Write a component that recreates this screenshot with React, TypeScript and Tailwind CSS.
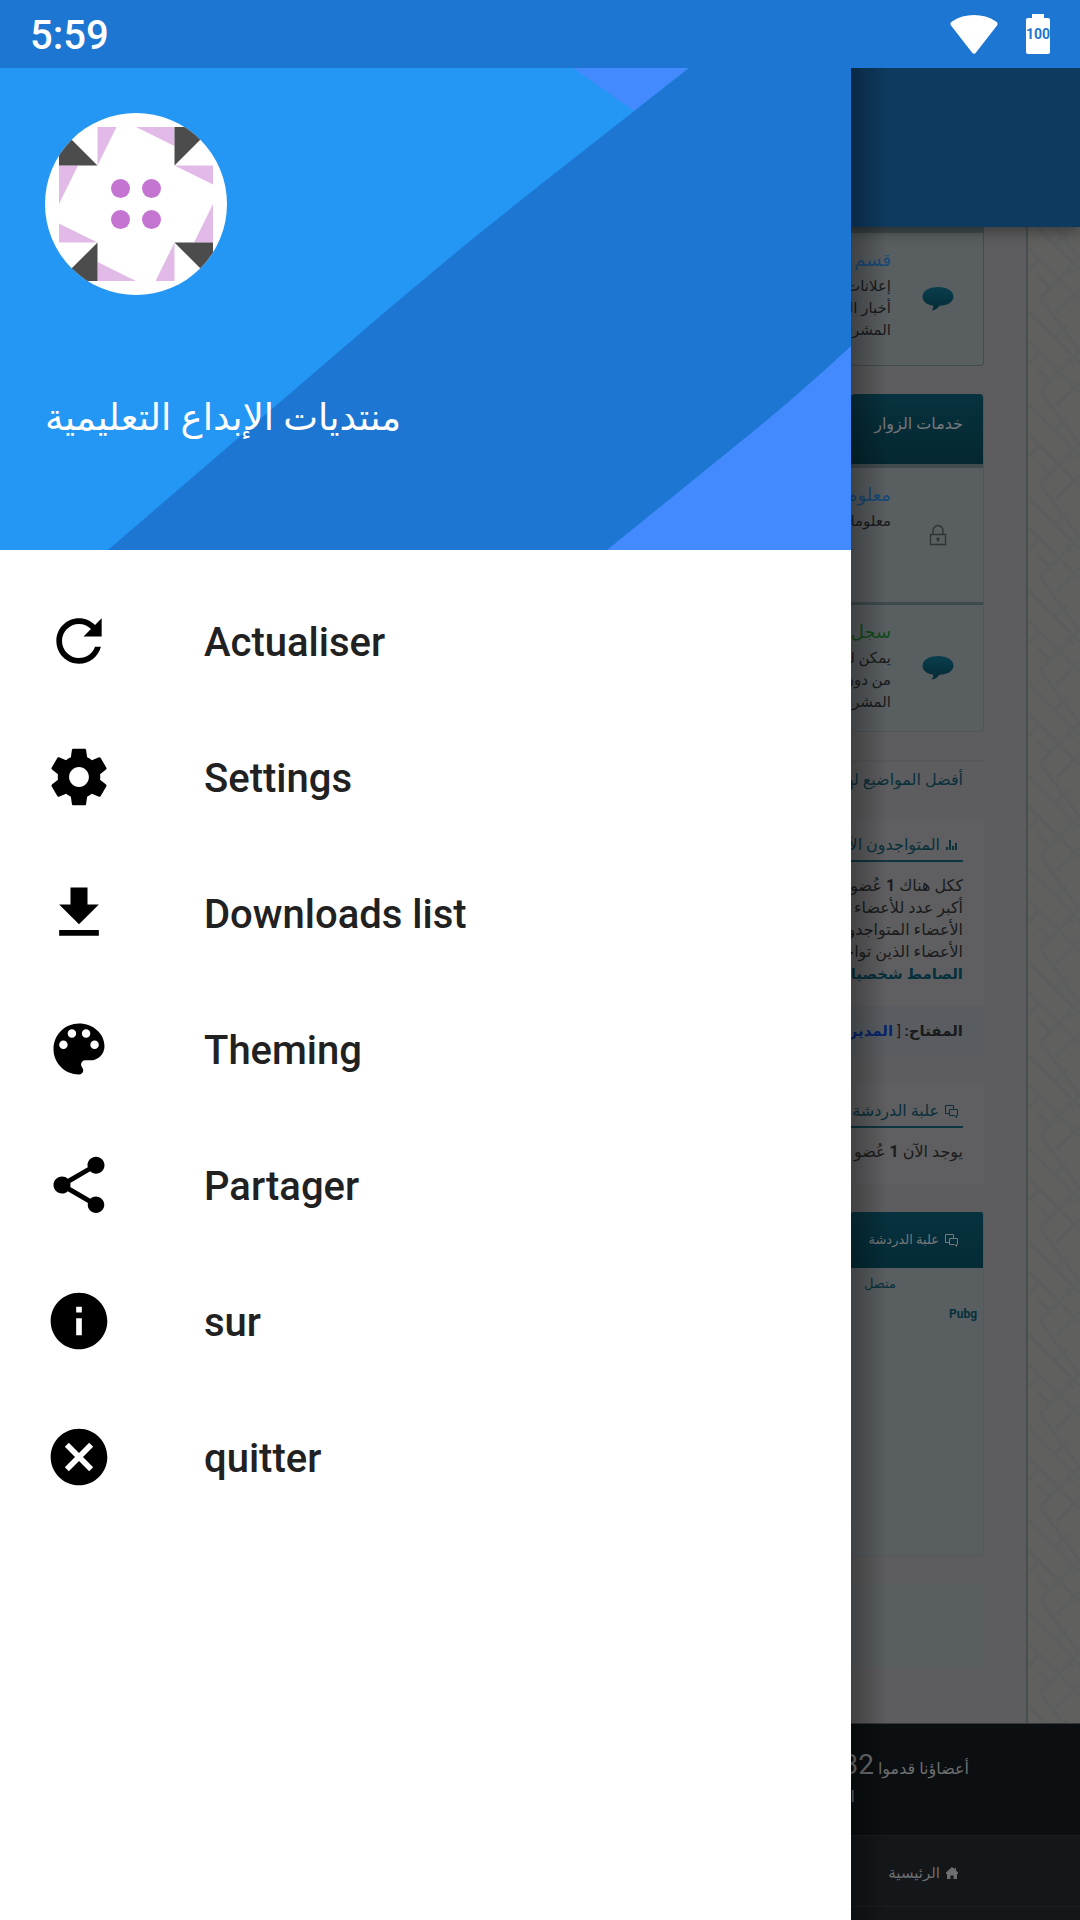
import type { ReactNode } from "react";

const MENU = [
  {
    label: "Actualiser",
    d: "M17.65 6.35C16.2 4.9 14.21 4 12 4c-4.42 0-7.99 3.58-7.99 8s3.57 8 7.99 8c3.73 0 6.84-2.55 7.73-6h-2.08c-.82 2.33-3.04 4-5.65 4-3.31 0-6-2.69-6-6s2.69-6 6-6c1.66 0 3.14.69 4.22 1.78L13.6 10.4h6.4V4l-2.35 2.35z",
  },
  {
    label: "Settings",
    d: "M19.43 12.98c.04-.32.07-.64.07-.98s-.03-.66-.07-.98l2.11-1.65c.19-.15.24-.42.12-.64l-2-3.46c-.12-.22-.39-.3-.61-.22l-2.49 1c-.52-.4-1.08-.73-1.69-.98l-.38-2.65C14.46 2.18 14.25 2 14 2h-4c-.25 0-.46.18-.49.42l-.38 2.65c-.61.25-1.17.59-1.69.98l-2.49-1c-.23-.09-.49 0-.61.22l-2 3.46c-.13.22-.07.49.12.64l2.11 1.65c-.04.32-.07.65-.07.98s.03.66.07.98l-2.11 1.65c-.19.15-.24.42-.12.64l2 3.46c.12.22.39.3.61.22l2.49-1c.52.4 1.08.73 1.69.98l.38 2.65c.03.24.24.42.49.42h4c.25 0 .46-.18.49-.42l.38-2.65c.61-.25 1.17-.59 1.69-.98l2.49 1c.23.09.49 0 .61-.22l2-3.46c.12-.22.07-.49-.12-.64l-2.11-1.65zM12 15.5c-1.93 0-3.5-1.57-3.5-3.5s1.57-3.5 3.5-3.5 3.5 1.57 3.5 3.5-1.57 3.5-3.5 3.5z",
  },
  { label: "Downloads list", d: "M19 9h-4V3H9v6H5l7 7 7-7zM5 18v2h14v-2H5z" },
  {
    label: "Theming",
    d: "M12 3c-4.97 0-9 4.03-9 9s4.03 9 9 9c.83 0 1.5-.67 1.5-1.5 0-.39-.15-.74-.39-1.01-.23-.26-.38-.61-.38-.99 0-.83.67-1.5 1.5-1.5H16c2.76 0 5-2.24 5-5 0-4.42-4.03-8-9-8zm-5.5 9c-.83 0-1.5-.67-1.5-1.5S5.67 9 6.5 9 8 9.67 8 10.5 7.33 12 6.5 12zm3-4C8.67 8 8 7.33 8 6.5S8.67 5 9.5 5s1.5.67 1.5 1.5S10.33 8 9.5 8zm5 0c-.83 0-1.5-.67-1.5-1.5S13.67 5 14.5 5s1.5.67 1.5 1.5S15.33 8 14.5 8zm3 4c-.83 0-1.5-.67-1.5-1.5S16.67 9 17.5 9s1.5.67 1.5 1.5-.67 1.5-1.5 1.5z",
  },
  {
    label: "Partager",
    d: "M18 16.08c-.76 0-1.44.3-1.96.77L8.91 12.7c.05-.23.09-.46.09-.7s-.04-.47-.09-.7l7.05-4.11c.54.5 1.25.81 2.04.81 1.66 0 3-1.34 3-3s-1.34-3-3-3-3 1.34-3 3c0 .24.04.47.09.7L8.04 9.81C7.5 9.31 6.79 9 6 9c-1.66 0-3 1.34-3 3s1.34 3 3 3c.79 0 1.5-.31 2.04-.81l7.12 4.16c-.05.21-.08.43-.08.65 0 1.61 1.31 2.92 2.92 2.92 1.61 0 2.92-1.31 2.92-2.92s-1.31-2.92-2.92-2.92z",
  },
  {
    label: "sur",
    d: "M12 2C6.48 2 2 6.48 2 12s4.48 10 10 10 10-4.48 10-10S17.52 2 12 2zm1 15h-2v-6h2v6zm0-8h-2V7h2v2z",
  },
  {
    label: "quitter",
    d: "M12 2C6.47 2 2 6.47 2 12s4.47 10 10 10 10-4.47 10-10S17.53 2 12 2zm5 13.59L15.59 17 12 13.41 8.41 17 7 15.59 10.59 12 7 8.41 8.41 7 12 10.59 15.59 7 17 8.41 13.41 12 17 15.59z",
  },
];

function StatusBar() {
  return (
    <div className="flex h-[68px] items-center justify-between bg-[#1c76d2] px-[30px] text-white">
      <span className="pt-1 text-[40px] leading-[60px] font-medium">5:59</span>
      <div className="flex items-center gap-7">
        <svg className="h-10 w-12" viewBox="0 0 48 40" fill="currentColor" aria-hidden="true">
          <path d="M1 11.500Q-.6 9 2 7.400Q12 1 24 1T46 7.400Q48.600 9 47 11.500L26 38.500Q24 41 22 38.500z" />
        </svg>
        <div className="flex flex-col items-center">
          <div className="h-1 w-3 bg-white" />
          <div className="flex h-9 w-6 items-center justify-center rounded-xs bg-white pb-1 text-[14px] leading-4 font-bold text-[#1c76d2]">
            100
          </div>
        </div>
      </div>
    </div>
  );
}

function Avatar() {
  return (
    <svg className="h-[182px] w-[182px] rounded-full bg-white" viewBox="0 0 182 182" aria-hidden="true">
      <path
        fill="#e1bae7"
        d="M52.500 14h19l-19 38.500zM91 14h38.500v19zM129.500 52.500H168v19zM168 91v38.500h-19zM129.500 129.500V168h-19zM91 168H52.500v-19zM52.500 129.500H14v-19zM14 52.500h19L14 91z"
      />
      <path
        fill="#4c4c4c"
        d="M14 14l38.500 38.500H14zM129.500 14H168l-38.500 38.500zM168 168l-38.500-38.500H168zM52.500 129.500V168H14z"
      />
      <g fill="#c475d2">
        <circle cx="75.500" cy="75.500" r="9.500" />
        <circle cx="106.500" cy="75.500" r="9.500" />
        <circle cx="75.500" cy="106.500" r="9.500" />
        <circle cx="106.500" cy="106.500" r="9.500" />
      </g>
    </svg>
  );
}

function Drawer() {
  return (
    <aside className="z-10 flex w-[851px] shrink-0 flex-col bg-white">
      <div className="relative h-[482px] overflow-hidden bg-[#2496f4]">
        <svg className="absolute inset-0 h-full w-full" viewBox="0 0 851 482" preserveAspectRatio="none" aria-hidden="true">
          <path fill="#448aff" d="M573 0H689L634 43z" />
          <path fill="#1c76d2" d="M689 0H851V482H108L385 244Q430 206 470 173L540 117z" />
          <path fill="#448aff" d="M851 278Q806 320 755 362L607 482H851z" />
        </svg>
        <div className="relative flex h-full flex-col justify-between px-[45px] pt-[45px] pb-[104px]">
          <Avatar />
          <p className="text-left text-[37px] leading-[56px] text-white" dir="rtl">
            منتديات الإبداع التعليمية
          </p>
        </div>
      </div>
      <nav className="flex flex-col pt-[23px]">
        {MENU.map((item) => (
          <button key={item.label} type="button" className="flex h-[136px] items-center gap-[91px] pl-[45px] text-left">
            <svg className="h-[68px] w-[68px]" viewBox="0 0 24 24" fill="#000" aria-hidden="true">
              <path d={item.d} />
            </svg>
            <span className="pt-1 text-[40px] leading-[48px] font-medium text-[#212121]">{item.label}</span>
          </button>
        ))}
      </nav>
    </aside>
  );
}

function Bubble() {
  return (
    <svg className="h-6 w-8" viewBox="0 0 32 24" aria-hidden="true">
      <defs>
        <linearGradient id="bubble" x1="0" y1="0" x2="0" y2="1">
          <stop offset="0" stopColor="#0a3e4d" />
          <stop offset="1" stopColor="#032a35" />
        </linearGradient>
      </defs>
      <path
        fill="url(#bubble)"
        d="M16 0C7 0 .5 4 .5 9.500c0 5 4 8.200 10.700 9.100.3 1.900-.3 3.500-1.600 5.200 3.500-.7 6.200-2.500 7.800-5C25.500 18.600 31.500 15 31.500 9.500 31.500 4 25 0 16 0z"
      />
    </svg>
  );
}

function Lock() {
  return (
    <svg className="h-10 w-10" viewBox="0 0 40 40" fill="none" stroke="#303235" strokeWidth="1.300" aria-hidden="true">
      <circle cx="20" cy="20" r="18.500" stroke="#5e5f60" strokeWidth="1" />
      <path d="M12.500 19.500h15v10h-15zM15 19.500v-4a5 5 0 0 1 10 0v4M20 24.500v2.500" />
      <circle cx="20" cy="23.800" r="1" />
    </svg>
  );
}

function ChatIcon() {
  return (
    <svg className="h-[13px] w-[13px] shrink-0" viewBox="0 0 13 13" fill="none" stroke="currentColor" aria-hidden="true">
      <path d="M4.500 8.500h-4v-8h8v4M4.500 4.500h8v6h-1v2l-2-2h-5z" />
    </svg>
  );
}

function ForumRow({ icon, title, color, lines }: { icon: ReactNode; title: string; color: string; lines: string[] }) {
  return (
    <div className="flex items-center gap-[27px] bg-[#595e61] pr-[25px]">
      <div className="flex w-10 shrink-0 justify-center">{icon}</div>
      <div className="h-full min-w-0 flex-1 pt-3">
        <a href="#" className={`block text-[18px] leading-[30px] ${color}`}>
          {title}
        </a>
        {lines.map((line) => (
          <p key={line} className="text-[15px] leading-[22px] text-[#1a1b1c]">
            {line}
          </p>
        ))}
      </div>
    </div>
  );
}

function BlockTitle({ icon, children }: { icon: ReactNode; children: ReactNode }) {
  return (
    <h2 className="flex h-7 items-center gap-[6px] border-b-2 border-[#0e3540] pr-[5px] pb-1 text-[16px] leading-6 text-[#0a303b]">
      {icon}
      <span>{children}</span>
    </h2>
  );
}

function Pattern() {
  return (
    <svg className="h-full w-full" aria-hidden="true">
      <defs>
        <pattern id="weave" width="52" height="93" patternUnits="userSpaceOnUse">
          <path
            d="M0 -9L52 43M0 84L52 136M0 21L52 73M12 71L52 31M12 71L52 125M12 -22L52 32M12 71L52 31M10 49L24 63M0 44L10 34M28 86L52 62M28 -7L52 -31M26 19L40 5M38 38L46 46"
            fill="none"
            stroke="#5c5e5d"
            strokeWidth="4"
          />
        </pattern>
      </defs>
      <rect width="100%" height="100%" fill="url(#weave)" />
    </svg>
  );
}

function ForumPage() {
  return (
    <div className="relative flex min-w-0 flex-1 flex-col overflow-hidden bg-[#5d5d5f] whitespace-nowrap" dir="rtl">
      <div className="z-10 h-[159px] shrink-0 bg-[#0e3a5f] shadow-[0_4px_14px_rgba(0,0,0,0.4)]" />
      <div className="flex h-[1496px] shrink-0">
        <div className="w-[54px] shrink-0 border-l-2 border-[#484e50] bg-[#60605f]">
          <Pattern />
        </div>
        <main className="min-w-0 flex-1 pr-[42px]">
          <section className="grid h-[139px] overflow-hidden rounded-b border-t-6 border-r border-b border-[#424b4e]">
            <ForumRow icon={<Bubble />} title="قسم الإدارة" color="text-[#174a78]" lines={["إعلانات المنتدى", "أخبار المنتدى", "المشرفون"]} />
          </section>

          <section className="mt-7 overflow-hidden rounded border-r border-b border-[#505659]">
            <h2 className="h-[70px] bg-linear-to-b from-[#07323f] to-[#042730] pt-3 pr-[20px] text-[16px] leading-9 text-[#77787a]">
              خدمات الزوار
            </h2>
            <div className="grid h-[138px] border-t-4 border-[#424b4e]">
              <ForumRow icon={<Lock />} title="معلومات" color="text-[#174a78]" lines={["معلومات"]} />
            </div>
            <div className="grid h-[129px] border-t-3 border-[#3f4a4c]">
              <ForumRow icon={<Bubble />} title="سجل الزوار" color="text-[#0f4d1b]" lines={["يمكن للزوار", "من دون تسجيل", "المشرفون"]} />
            </div>
          </section>

          <div className="mt-7 border-t-2 border-[#56585a] pt-1 pr-[21px]">
            <a href="#" className="block text-[16px] leading-7 text-[#0a303b]">
              أفضل المواضيع لهذا اليوم
            </a>
          </div>

          <section className="mt-6 bg-[#5f5f61]">
            <div className="h-[188px] pt-4 pr-[21px]">
              <BlockTitle
                icon={
                  <svg className="h-3 w-3 shrink-0" viewBox="0 0 12 12" fill="currentColor" aria-hidden="true">
                    <path d="M0 8h2v3H0zM3 1h2v10H3zM6 7h2v4H6zM9 4h2v7H9z" />
                  </svg>
                }
              >
                المتواجدون الآن
              </BlockTitle>
              <div className="pt-[13px] text-[16px] leading-[22px] text-[#1a1b1c]">
                <p>
                  ككل هناك <b>1</b> عُضو متصل
                </p>
                <p>أكبر عدد للأعضاء المتواجدين</p>
                <p>الأعضاء المتواجدون</p>
                <p>الأعضاء الذين تواجدوا</p>
                <p className="text-[15px]">
                  <a href="#" className="font-bold text-[#06303c]">
                    الصامط شخصيا
                  </a>
                  ,
                </p>
              </div>
            </div>
            <p className="h-[51px] bg-[#595d61] pr-[21px] text-[15px] leading-[50px] text-[#1a1b1c]">
              <b>المفتاح:</b> [ <b className="text-[#08256b]">المدير</b> ]
            </p>
          </section>

          <section className="mt-[27px] h-[100px] bg-[#5f5f61] pt-4 pr-[21px]">
            <BlockTitle icon={<ChatIcon />}>علبة الدردشة</BlockTitle>
            <p className="pt-[13px] text-[16px] leading-[22px] text-[#1a1b1c]">
              يوجد الآن <b>1</b> عُضو متصل
            </p>
          </section>

          <section className="mt-7 h-[344px] border-r border-b border-[#54595c] bg-[#595e61]">
            <h2 className="flex h-14 items-center gap-[6px] rounded-t-xs bg-linear-to-b from-[#07323f] to-[#042b36] pr-[25px] text-[13px] leading-6 text-[#77787a]">
              <ChatIcon />
              علبة الدردشة
            </h2>
            <p className="pt-1 pr-[87px] text-[13px] leading-6 text-[#0a303b]">متصل</p>
            <p className="pt-2 pr-[6px] text-[12px] leading-5 font-bold text-[#06303c]">Pubg</p>
          </section>

          <div className="mt-7 h-[82px] bg-[#595e61]" />
        </main>
      </div>
      <footer className="flex flex-1 flex-col border-t border-[#33393b] bg-[#13171a] text-[16px] text-[#6d6e70]">
        <div className="h-[111px] bg-[#0b0f11] pt-[25px] pr-[111px]">
          <p className="leading-8">
            أعضاؤنا قدموا <span className="text-[28px]">9632</span>
          </p>
          <p className="pr-[114px] leading-6">ا</p>
        </div>
        <div className="flex h-[72px] items-center gap-[6px] border-t border-b border-[#1b1f21] pt-1 pr-[122px]">
          <svg className="h-3 w-3" viewBox="0 0 12 12" fill="currentColor" aria-hidden="true">
            <path d="M6 0L0 5.500V7h1v5h3.500V8.500h3V12H11V7h1V5.500L10 3.600V1H8.500v1.200z" />
          </svg>
          <a href="#" className="text-[15px] leading-6">
            الرئيسية
          </a>
        </div>
      </footer>
      {/* shadow cast by the drawer edge */}
      <div className="pointer-events-none absolute inset-y-0 left-0 z-20 w-9 bg-linear-to-r from-black/30 to-transparent" />
    </div>
  );
}

export default function App() {
  return (
    <div className="flex min-h-screen flex-col font-[Roboto,'Noto_Sans','DejaVu_Sans',sans-serif]">
      <StatusBar />
      <div className="flex flex-1">
        <Drawer />
        <ForumPage />
      </div>
    </div>
  );
}
